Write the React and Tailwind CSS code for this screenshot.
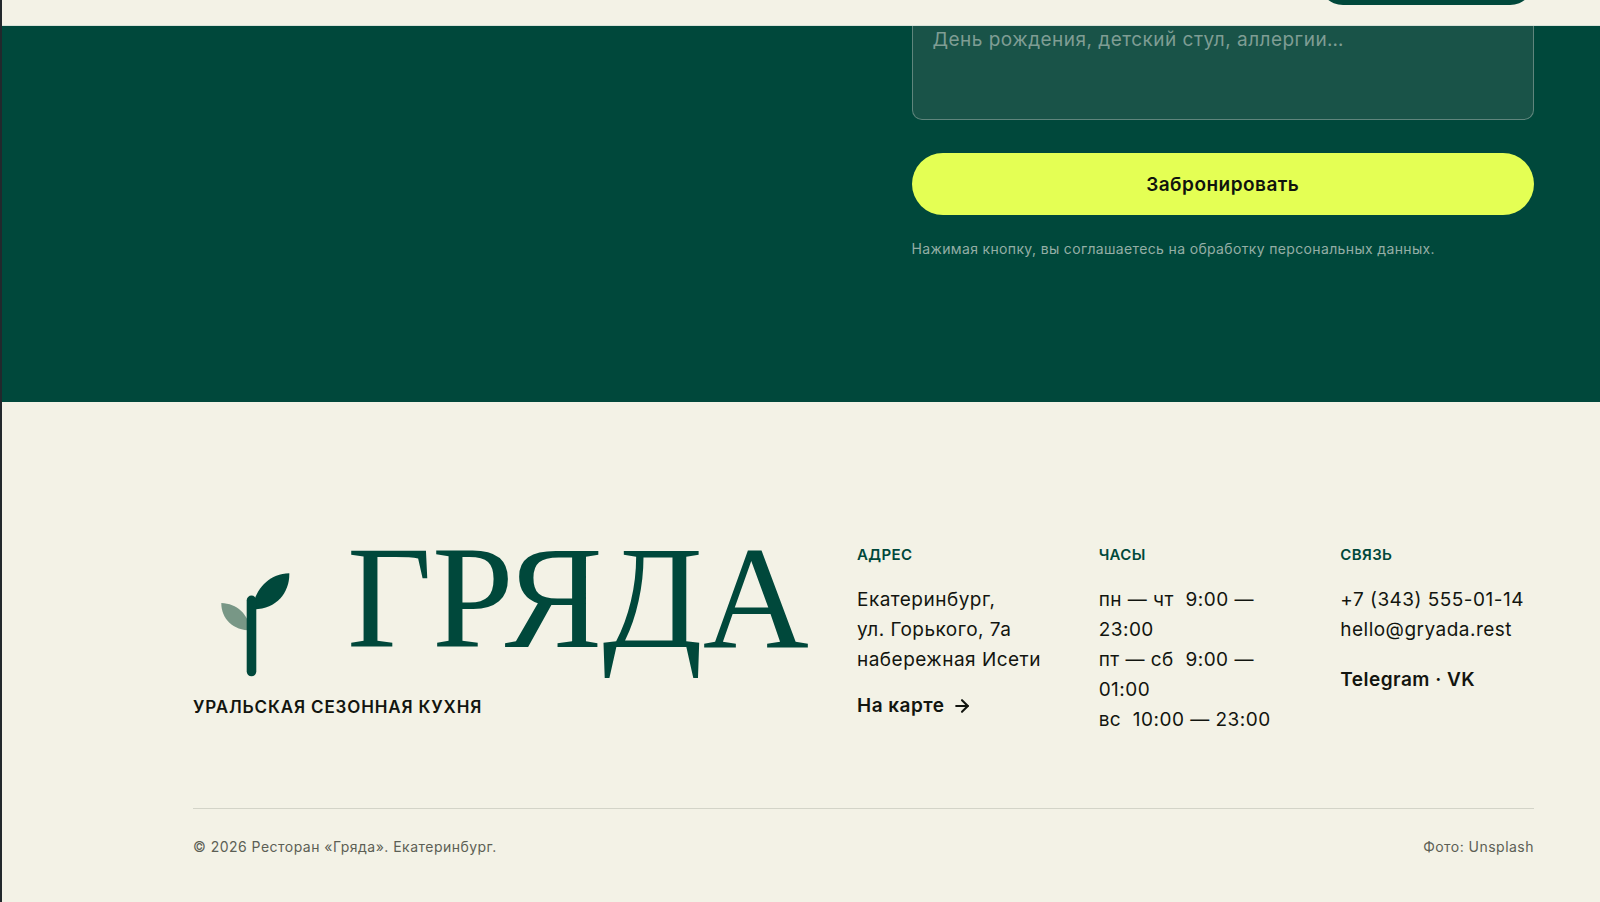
import { ArrowRight } from "lucide-react";

const hours = ["пн — чт\u00a0 9:00 — 23:00", "пт — сб\u00a0 9:00 — 01:00", "вс\u00a0 10:00 — 23:00"];

function Sprout() {
    return (
        <svg viewBox="0 0 116 120" className="mt-4 w-[116px] h-[120px] shrink-0" aria-hidden="true">
            <path d="M28.3 42C28.3 58 40 69.5 58 69.5C55 53 44 42.5 28.3 42Z" fill="#789786" />
            <path d="M96.3 12.3C96.8 31 84 48.5 60 48.5C60 32 74 12.5 96.3 12.3Z" fill="#00483b" />
            <rect x="53.7" y="34.5" width="9.6" height="80.8" rx="4.8" fill="#00483b" />
        </svg>
    );
}

function FooterColumn({ title, children }) {
    return (
        <div>
            <h2 className="mb-5 text-[15px] leading-5 font-semibold tracking-wide text-[#00483b] uppercase">{title}</h2>
            {children}
        </div>
    );
}

function TopBar() {
    return (
        <header className="flex h-[26px] items-end justify-end overflow-hidden border-b border-[#d8e2d9] bg-[#f3f2e6] pr-[66px] pb-5">
            <button type="button" aria-label="Забронировать" className="h-12 w-[215px] shrink-0 rounded-full bg-[#00483b]" />
        </header>
    );
}

function Booking() {
    return (
        <section className="bg-[#00483b] pr-[66px] pb-[143px] pl-[191px]">
            <form className="grid grid-cols-2 gap-24" onSubmit={(e) => e.preventDefault()}>
                <div className="col-start-2 flex flex-col">
                    <textarea
                        aria-label="Пожелания"
                        placeholder="День рождения, детский стул, аллергии…"
                        className="h-[94px] w-full resize-none rounded-b-[10px] border border-t-0 border-[#5f857c] bg-[#195348] px-5 text-[19px] leading-7 tracking-wide text-white outline-none placeholder:text-[#7f9d94]"
                    />
                    <button
                        type="submit"
                        className="mt-[33px] h-[62px] rounded-full bg-[#e4ff54] pt-[2px] text-[19px] font-semibold tracking-wide text-[#10130d]"
                    >
                        Забронировать
                    </button>
                    <p className="mt-6 text-[14px] leading-5 tracking-wide text-[#94aea5]">
                        Нажимая кнопку, вы соглашаетесь на обработку персональных данных.
                    </p>
                </div>
            </form>
        </section>
    );
}

function Footer() {
    return (
        <footer className="bg-[#f3f2e6] pt-[143px] pr-[66px] pb-11 pl-[191px] text-[19px] leading-[30px] tracking-wide text-[#12150f]">
            <div className="grid grid-cols-[616px_1fr_1fr_1fr] gap-12">
                <div>
                    <div className="flex h-[142px] items-start gap-[38px]">
                        <Sprout />
                        <span className="font-['Liberation_Serif',serif] text-[147px] leading-[106px] tracking-normal text-[#00483b]">
                            ГРЯДА
                        </span>
                    </div>
                    <p className="mt-[10px] text-[17px] leading-5 font-semibold tracking-wider uppercase">
                        Уральская сезонная кухня
                    </p>
                </div>
                <FooterColumn title="Адрес">
                    <address className="not-italic">
                        Екатеринбург,
                        <br />
                        ул. Горького, 7а
                        <br />
                        набережная Исети
                    </address>
                    <a href="#map" className="mt-4 flex items-center gap-2 font-semibold">
                        На карте
                        <ArrowRight className="size-5" strokeWidth={2.5} />
                    </a>
                </FooterColumn>
                <FooterColumn title="Часы">
                    {hours.map((line) => (
                        <p key={line}>{line}</p>
                    ))}
                </FooterColumn>
                <FooterColumn title="Связь">
                    <a href="tel:+73435550114" className="block whitespace-nowrap">+7 (343) 555-01-14</a>
                    <a href="mailto:hello@gryada.rest" className="block">hello@gryada.rest</a>
                    <p className="mt-5 font-semibold">
                        <a href="#telegram">Telegram</a> · <a href="#vk">VK</a>
                    </p>
                </FooterColumn>
            </div>
            <div className="mt-[73px] flex justify-between border-t border-[#d3d4c8] pt-7 text-[14px] leading-5 text-[#5c5f55]">
                <p>© 2026 Ресторан «Гряда». Екатеринбург.</p>
                <p>Фото: Unsplash</p>
            </div>
        </footer>
    );
}

export default function App() {
    return (
        <div className="min-h-screen border-l-2 border-[#22282c] bg-[#f3f2e6] font-['Inter',sans-serif]">
            <TopBar />
            <main>
                <Booking />
            </main>
            <Footer />
        </div>
    );
}
